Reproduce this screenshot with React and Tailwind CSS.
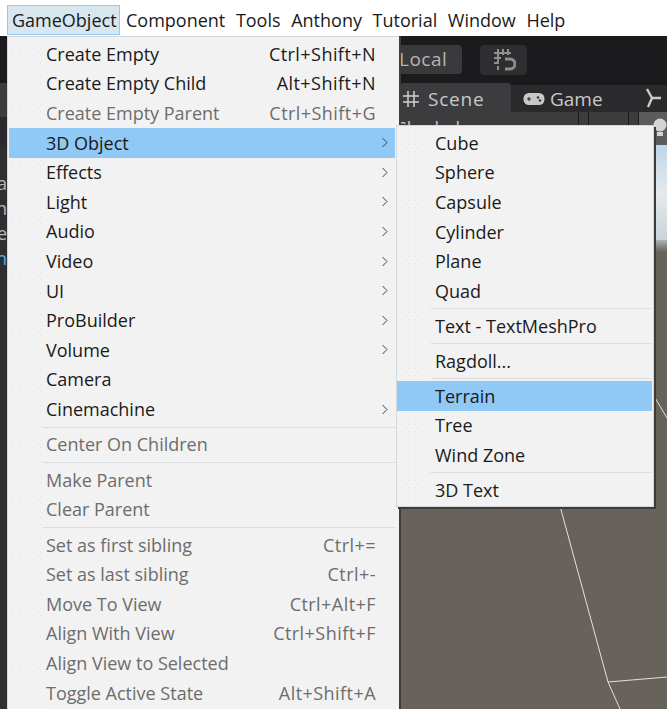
const font = { fontFamily: '"Open Sans","Noto Sans",sans-serif' };

function Chevron() {
  return (
    <svg width="8" height="12" viewBox="0 0 8 12" className="absolute right-[6px] top-[9px]" fill="none">
      <path d="M1.5 1 L6 5.5 L1.5 10" stroke="#444" strokeWidth="1" />
    </svg>
  );
}

function Item({ label, shortcut, disabled, sub, active, inSub }) {
  return (
    <div
      className={`relative flex items-center justify-between h-[29.6px] pr-[19px] text-[18px] ${inSub ? "pl-[38px]" : "pl-[37px]"} ${disabled ? "text-[#6d6d6d]" : "text-[#1a1a1a]"} ${active ? "bg-[#90c8f6]" : ""}`}
    >
      <span>{label}</span>
      {shortcut && <span className="tracking-[0.45px]">{shortcut}</span>}
      {sub && <Chevron />}
    </div>
  );
}

function Sep({ sub }) {
  return (
    <div className={`ml-[34px] flex items-center ${sub ? "h-[5.4px] mr-[1px]" : "h-[5.8px]"}`}>
      <div className="h-px w-full bg-[#d6dde0]" />
    </div>
  );
}

function Dots({ w }) {
  return (
    <div
      className={`absolute left-px top-px bottom-0 ${w} bg-[radial-gradient(#dde3e6_0.6px,transparent_0.8px)] bg-[length:7px_7px]`}
    />
  );
}

const navItems = ["Component", "Tools", "Anthony", "Tutorial", "Window", "Help"];

export default function App() {
  return (
    <div className="relative w-[667px] h-[709px] overflow-hidden bg-[#68625c] flex flex-col" style={font}>
      <div className="h-[36px] bg-white flex items-start pl-[7px] shrink-0">
        <div className="h-[30px] mt-[5px] w-[113px] pl-[4px] flex items-center text-[18px] text-[#1a1a1a] bg-[#d8e6f0] border border-[#90c8f6]">GameObject</div>
        <div className="flex h-[30px] mt-[5px] items-center gap-[10.6px] ml-[6px] text-[18px] text-[#1a1a1a]">
          {navItems.map((n) => <span key={n}>{n}</span>)}
        </div>
      </div>

      <div className="h-[47px] bg-[#1b1b1e] shrink-0 flex items-center pl-[399px] gap-[18px]">
        <div className="w-[63px] h-[29px] rounded bg-[#3a3a3c] text-[#b5b5b5] text-[19px] tracking-[0.5px] flex items-center">Local</div>
        <div className="w-[47px] h-[30px] rounded bg-[#2e2e30] flex items-center justify-center">
          <svg width="24" height="24" viewBox="0 0 24 24" fill="none" stroke="#8f8f8f" strokeWidth="2">
            <path d="M6 1v13M11 1v6M16 1v6M2 5h17M2 10h7M2 15h5M6 18v4" />
            <path d="M13 11h5a4.5 4.5 0 0 1 0 10h-5" strokeWidth="3" />
          </svg>
        </div>
      </div>

      <div className="h-[29px] bg-[#1b1b1e] shrink-0 flex pl-[400px]">
        <div className="w-[111px] bg-[#3c3c3e] rounded-t text-[#c8c8c8] text-[19px] tracking-[0.8px] flex items-center gap-[9px] pl-[3px] pt-[3px]">
          <svg width="16" height="16" viewBox="0 0 16 16" fill="none" stroke="#cfcfcf" strokeWidth="1.5">
            <path d="M5 0v16M11 0v16M0 5h16M0 11h16" />
          </svg>
          <span>Scene</span>
        </div>
        <div className="w-[122px] mt-[2px] bg-[#2a2a2c] text-[#c8c8c8] text-[19px] flex items-center gap-[5px] pl-[12px] pt-[1px]">
          <svg width="22" height="14" viewBox="0 0 22 14">
            <rect x="0.5" y="1" width="21" height="12" rx="5.5" fill="#c8c8c8" />
            <path d="M4 7h4M6 5v4" stroke="#333" strokeWidth="1.2" />
            <circle cx="15" cy="5.5" r="1.2" fill="#333" />
            <circle cx="17" cy="8.5" r="1.2" fill="#333" />
          </svg>
          <span>Game</span>
        </div>
        <div className="flex-1 mt-[2px] bg-[#2a2a2c] pl-[12px] pt-[3px]">
          <svg width="16" height="20" viewBox="0 0 16 20" fill="none" stroke="#cfc9c4" strokeWidth="2.4">
            <path d="M2 1l5 9-4 9M7 10h9" />
          </svg>
        </div>
      </div>

      <div className="h-[33px] bg-[#3c3c3e] shrink-0 flex text-[#c8c8c8] text-[18px]">
        <span className="ml-[397px] mt-[3px] w-[181px]">Shaded</span>
        <div className="w-px bg-[#1b1b1e]" />
        <div className="w-[9px]" />
        <div className="w-px bg-[#1b1b1e]" />
        <div className="w-[39px]" />
        <div className="w-px bg-[#1b1b1e]" />
        <div className="w-[9px]" />
        <div className="w-px bg-[#1b1b1e]" />
        <div className="flex-1 bg-[#5c5c5c]" />
      </div>

      <div className="h-[95px] bg-gradient-to-b from-[#bcd6ea] via-[#e6e9ea] to-[#c9d4dc] shrink-0" />
      <div className="h-[12px] bg-gradient-to-b from-[#aeb4b4] to-[#68625c] shrink-0" />
      <div className="flex-1 bg-[#68625c]" />

      {/* left strip seen beside the menu */}
      <div className="absolute left-0 top-[36px] bottom-0 w-[7px] bg-[#2f2f31] overflow-hidden text-[18px] text-[#b9b9b9] leading-[25px]">
        <div className="h-[47px] bg-[#1b1b1e]" />
        <div className="h-[34px] bg-[#3c3c3e]" />
        <div className="h-[28px] bg-[#2a2a2c]" />
        <div className="flex flex-col items-end whitespace-nowrap mt-[26px]">
          <span>a</span>
          <span>in</span>
          <span>e</span>
          <span className="text-[#5ab0f5]">h</span>
        </div>
      </div>

      {/* scene gizmo bulb */}
      <svg className="absolute left-[653px] top-[118px]" width="14" height="20" viewBox="0 0 14 20">
        <circle cx="7" cy="7" r="6.5" fill="#d4d4d4" />
        <rect x="4" y="14" width="6" height="4" fill="#d4d4d4" />
      </svg>

      {/* scene lines */}
      <svg className="absolute left-0 top-0 pointer-events-none" width="667" height="709" fill="none" stroke="#e4e0dc" strokeWidth="1">
        <path d="M560 506 L608 682 L620 709" />
        <path d="M608 682 L667 677" />
        <path d="M654 396 L667 418" />
      </svg>

      {/* main menu */}
      <div className="absolute left-[7px] top-[36px] w-[392px] h-[673px] bg-[#f2f2f2] border-l border-t border-[#d0d8dc] shadow-[2px_0_0_#3f3b38] pt-[2.5px] pl-px pr-[4px]">
        <Dots w="w-[34px]" />
        <div className="relative">
          <Item label="Create Empty" shortcut="Ctrl+Shift+N" />
          <Item label="Create Empty Child" shortcut="Alt+Shift+N" />
          <Item label="Create Empty Parent" shortcut="Ctrl+Shift+G" disabled />
          <Item label="3D Object" sub active />
          <Item label="Effects" sub />
          <Item label="Light" sub />
          <Item label="Audio" sub />
          <Item label="Video" sub />
          <Item label="UI" sub />
          <Item label="ProBuilder" sub />
          <Item label="Volume" sub />
          <Item label="Camera" />
          <Item label="Cinemachine" sub />
          <Sep />
          <Item label="Center On Children" disabled />
          <Sep />
          <Item label="Make Parent" disabled />
          <Item label="Clear Parent" disabled />
          <Sep />
          <Item label="Set as first sibling" shortcut="Ctrl+=" disabled />
          <Item label="Set as last sibling" shortcut="Ctrl+-" disabled />
          <Item label="Move To View" shortcut="Ctrl+Alt+F" disabled />
          <Item label="Align With View" shortcut="Ctrl+Shift+F" disabled />
          <Item label="Align View to Selected" disabled />
          <Item label="Toggle Active State" shortcut="Alt+Shift+A" disabled />
        </div>
      </div>

      {/* submenu */}
      <div className="absolute left-[396px] top-[125px] w-[258px] bg-[#f2f2f2] border border-[#d0d8dc] shadow-[2px_2px_0_#3f3b38] pt-[2.5px] pb-[1px] pr-[1px]">
        <Dots w="w-[33px]" />
        <div className="relative">
          {["Cube", "Sphere", "Capsule", "Cylinder", "Plane", "Quad"].map((x) => <Item key={x} label={x} inSub />)}
          <Sep sub />
          <Item label="Text - TextMeshPro" inSub />
          <Sep sub />
          <Item label="Ragdoll..." inSub />
          <Sep sub />
          <Item label="Terrain" active inSub />
          <Item label="Tree" inSub />
          <Item label="Wind Zone" inSub />
          <Sep sub />
          <Item label="3D Text" inSub />
        </div>
      </div>
    </div>
  );
}
